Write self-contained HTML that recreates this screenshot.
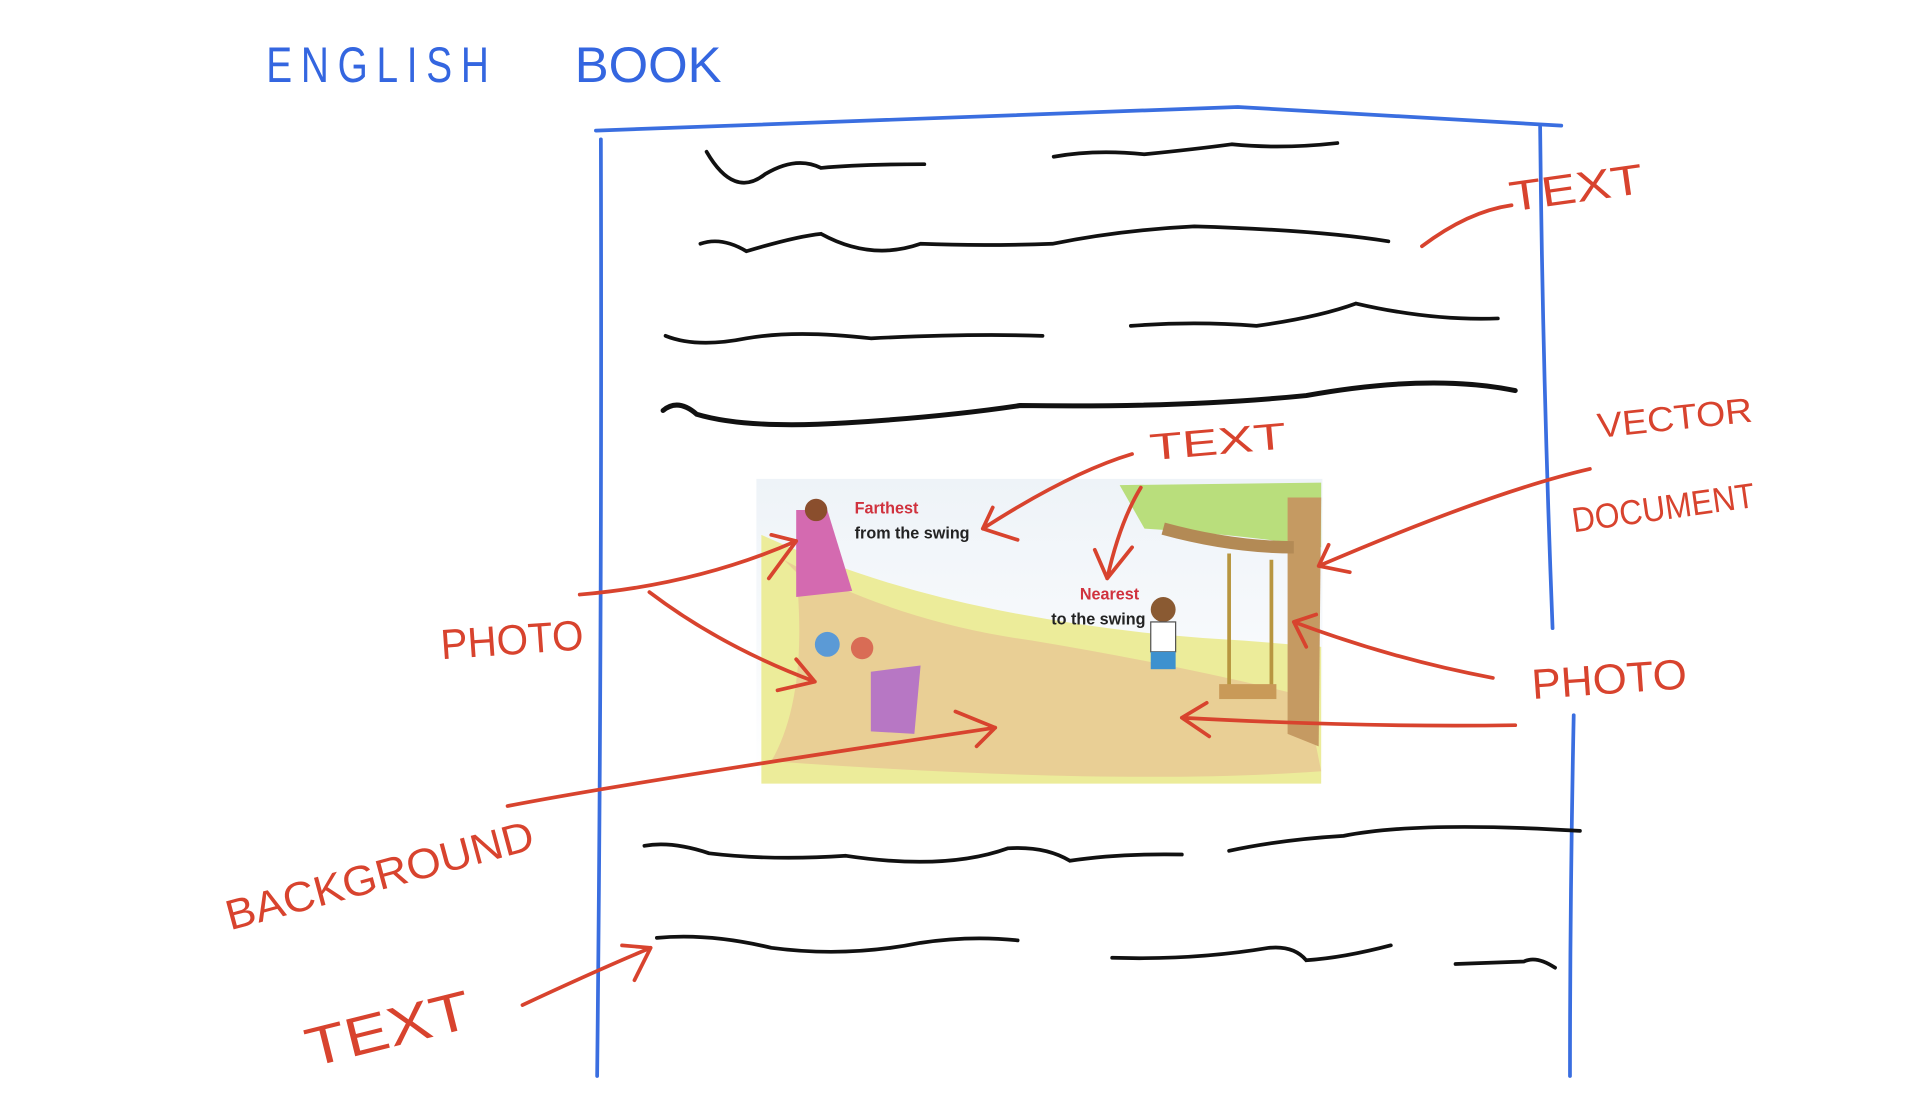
<!DOCTYPE html>
<html><head><meta charset="utf-8"><style>
html,body{margin:0;padding:0;background:#fff;width:1932px;height:1117px;overflow:hidden}
svg{display:block}
.h{font-family:"Liberation Sans",sans-serif;}
</style></head><body>
<svg width="1932" height="1117" viewBox="0 0 1553 898" preserveAspectRatio="none" xmlns="http://www.w3.org/2000/svg">
<defs>
<linearGradient id="sky" x1="0" y1="0" x2="0" y2="1"><stop offset="0" stop-color="#eef3f8"/><stop offset="1" stop-color="#ffffff"/></linearGradient>
</defs>
<!-- title -->
<text x="214" y="66" class="h" font-size="40" fill="#3466e0" letter-spacing="9" textLength="186" lengthAdjust="spacingAndGlyphs">ENGLISH</text>
<text x="462" y="66" class="h" font-size="40" fill="#3466e0" textLength="118" lengthAdjust="spacingAndGlyphs">BOOK</text>
<!-- page border -->
<g fill="none" stroke="#3a6ee0" stroke-width="3" stroke-linecap="round">
<path d="M479 105 Q700 96 995 86 L1255 101"/>
<path d="M483 112 Q484 500 480 865"/>
<path d="M1238 102 Q1240 300 1248 505"/>
<path d="M1265 575 Q1262 720 1262 865"/>
</g>
<!-- illustration -->
<g>
<rect x="608" y="385" width="455" height="245" fill="url(#sky)"/>
<path d="M612 430 Q700 470 800 490 Q900 510 1000 515 L1062 520 L1062 630 L612 630 Z" fill="#ecec9a"/>
<path d="M630 450 Q720 500 830 515 Q950 535 1050 560 L1062 620 Q900 632 620 612 Q650 560 640 460 Z" fill="#e9cf95"/>
<path d="M900 390 L1062 388 L1062 440 Q1000 430 920 425 Z" fill="#b9de7c"/>
<path d="M1035 400 L1062 400 L1060 600 L1035 590 Z" fill="#c59a62"/>
<path d="M935 425 Q990 440 1040 440" stroke="#b38a55" stroke-width="10" fill="none"/>
<path d="M988 445 L988 560 M1022 450 L1022 555" stroke="#b89640" stroke-width="3"/>
<rect x="980" y="550" width="46" height="12" fill="#c99a58"/>
<path d="M640 410 L665 410 L685 475 L640 480 Z" fill="#d46ab0"/>
<circle cx="656" cy="410" r="9" fill="#8a4e2d"/>
<circle cx="665" cy="518" r="10" fill="#5b9ad6"/><circle cx="693" cy="521" r="9" fill="#d96c55"/>
<path d="M700 540 L740 535 L735 590 L700 588 Z" fill="#b777c4"/>
<circle cx="935" cy="490" r="10" fill="#8a5a32"/>
<rect x="925" y="500" width="20" height="24" fill="#fff" stroke="#555" stroke-width="1"/>
<rect x="925" y="524" width="20" height="14" fill="#3d91cf"/>
<text x="687" y="413" class="h" font-size="13" font-weight="bold" fill="#d0323e">Farthest</text>
<text x="687" y="433" class="h" font-size="13" font-weight="bold" fill="#222">from the swing</text>
<text x="868" y="482" class="h" font-size="13" font-weight="bold" fill="#d0323e">Nearest</text>
<text x="845" y="502" class="h" font-size="13" font-weight="bold" fill="#222">to the swing</text>
</g>
<!-- black text scribbles -->
<g fill="none" stroke="#111" stroke-width="3" stroke-linecap="round">
<path d="M568 122 Q590 160 615 140 Q640 125 660 135 Q690 132 743 132"/>
<path d="M847 126 Q880 120 920 124 Q960 120 990 116 Q1030 120 1075 115"/>
<path d="M563 196 Q580 190 600 202 Q640 190 660 188 Q700 210 740 196 Q790 198 846 196 Q900 185 960 182 Q1060 185 1116 194"/>
<path d="M535 270 Q560 280 600 272 Q640 265 700 272 Q780 268 838 270"/>
<path d="M909 262 Q960 258 1010 262 Q1060 255 1090 244 Q1150 258 1204 256"/>
<path d="M533 330 Q545 320 560 333 Q600 345 680 340 Q760 335 820 326 Q950 328 1050 318 Q1150 300 1218 314" stroke-width="4"/>
<path d="M518 680 Q540 676 570 686 Q620 692 680 688 Q760 700 810 682 Q840 680 860 692 Q900 686 950 687"/>
<path d="M988 684 Q1030 675 1080 672 Q1140 660 1270 668"/>
<path d="M528 754 Q570 750 620 762 Q680 770 740 758 Q780 752 818 756"/>
<path d="M894 770 Q960 772 1020 762 Q1040 760 1050 772 Q1080 770 1118 760"/>
<path d="M1170 775 L1225 773 Q1235 768 1250 778"/>
</g>
<!-- red annotations -->
<g fill="none" stroke="#d8432e" stroke-width="3" stroke-linecap="round" stroke-linejoin="round">
<path d="M1143 198 Q1180 170 1215 165"/>
<path d="M910 365 Q860 380 790 425 M790 425 Q805 430 818 434 M790 425 L798 408"/>
<path d="M917 392 Q900 420 890 465 M890 465 L880 442 M890 465 L910 440"/>
<path d="M1278 377 Q1200 395 1060 455 M1060 455 L1085 460 M1060 455 L1068 438"/>
<path d="M466 478 Q560 470 640 435 M640 435 L620 430 M640 435 L618 465"/>
<path d="M522 476 Q580 520 655 548 M655 548 L640 530 M655 548 L625 555"/>
<path d="M408 648 Q500 630 800 585 M800 585 L768 572 M800 585 L785 600"/>
<path d="M1200 545 Q1120 530 1040 500 M1040 500 L1050 520 M1040 500 L1058 494"/>
<path d="M1218 583 Q1100 585 950 577 M950 577 L970 565 M950 577 L972 592"/>
<path d="M420 808 Q480 780 523 762 M523 762 L510 788 M523 762 L500 760"/>
</g>
<g class="h" fill="#d8432e" font-size="34">
<text x="1215" y="170" transform="rotate(-8 1215 170)" textLength="108" lengthAdjust="spacingAndGlyphs">TEXT</text>
<text x="925" y="370" font-size="30" transform="rotate(-5 925 370)" textLength="110" lengthAdjust="spacingAndGlyphs">TEXT</text>
<text x="1285" y="352" font-size="28" transform="rotate(-6 1285 352)" textLength="125" lengthAdjust="spacingAndGlyphs">VECTOR</text>
<text x="1265" y="428" font-size="28" transform="rotate(-8 1265 428)" textLength="148" lengthAdjust="spacingAndGlyphs">DOCUMENT</text>
<text x="355" y="530" transform="rotate(-4 355 530)" textLength="115" lengthAdjust="spacingAndGlyphs">PHOTO</text>
<text x="1232" y="562" transform="rotate(-4 1232 562)" textLength="125" lengthAdjust="spacingAndGlyphs">PHOTO</text>
<text x="185" y="748" transform="rotate(-15 185 748)" textLength="255" lengthAdjust="spacingAndGlyphs">BACKGROUND</text>
<text x="250" y="858" font-size="44" transform="rotate(-14 250 858)" textLength="135" lengthAdjust="spacingAndGlyphs">TEXT</text>
</g>
</svg>
</body></html>
